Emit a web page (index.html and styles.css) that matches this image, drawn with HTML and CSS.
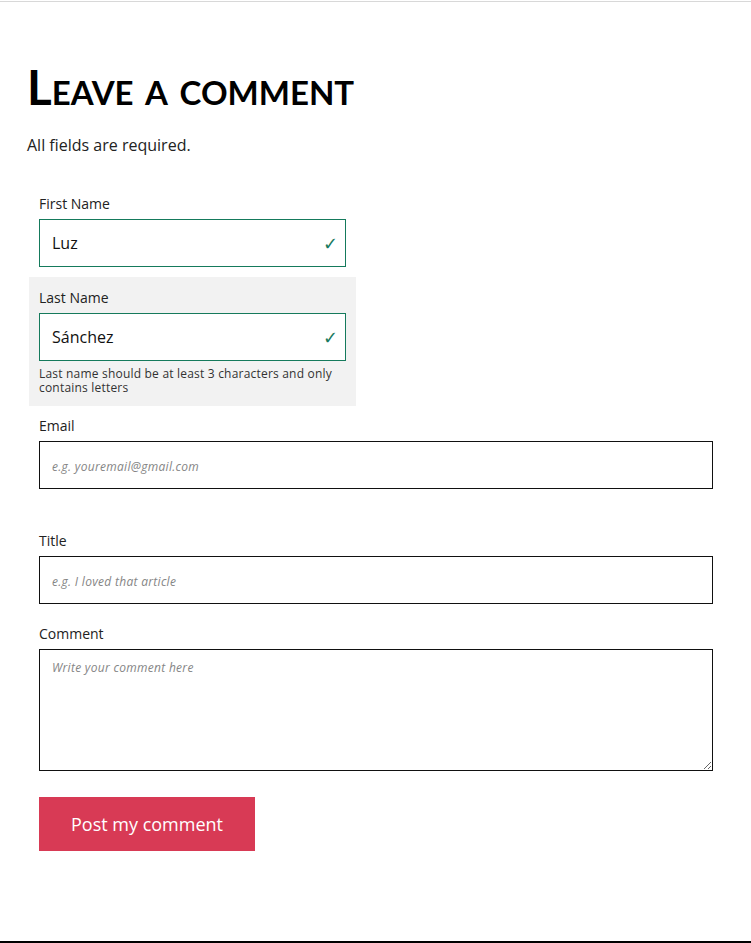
FILE: index.html
```html
<!DOCTYPE html>
<html lang="en">
<head>
<meta charset="utf-8">
<title>Leave a comment</title>
<link rel="stylesheet" href="styles.css">
</head>
<body>
<div class="page">
  <div class="topline"></div>
  <main class="content">
    <h1 class="title">Leave a comment</h1>
    <p class="note">All fields are required.</p>
    <form class="form">
      <div class="field narrow">
        <label class="label" for="first">First Name</label>
        <div class="input-wrap">
          <input class="input valid" id="first" type="text" value="Luz">
          <span class="check">✓</span>
        </div>
      </div>
      <div class="field narrow highlight">
        <label class="label" for="last">Last Name</label>
        <div class="input-wrap">
          <input class="input valid" id="last" type="text" value="Sánchez">
          <span class="check">✓</span>
        </div>
        <div class="hint">Last name should be at least 3 characters and only contains letters</div>
      </div>
      <div class="field spaced">
        <label class="label" for="email">Email</label>
        <input class="input" id="email" type="email" placeholder="e.g. youremail@gmail.com">
      </div>
      <div class="field">
        <label class="label" for="title">Title</label>
        <input class="input" id="title" type="text" placeholder="e.g. I loved that article">
      </div>
      <div class="field">
        <label class="label" for="comment">Comment</label>
        <textarea class="input area" id="comment" placeholder="Write your comment here"></textarea>
      </div>
      <div class="actions">
        <button class="submit" type="button">Post my comment</button>
      </div>
    </form>
  </main>
  <footer class="footer"></footer>
</div>
</body>
</html>
```
FILE: styles.css
```css
* { box-sizing: border-box; }
html, body { margin: 0; padding: 0; }
body {
  font-family: "Open Sans", "Noto Sans", sans-serif;
  color: #111;
  background: #fff;
}
.page {
  display: flex;
  flex-direction: column;
  min-height: 100vh;
}
.topline {
  height: 2px;
  border-bottom: 1px solid #d8d8d8;
}
.content {
  flex: 1;
  padding: 0 28px 0 27px;
}
.title {
  font-family: "Lato", "Open Sans", sans-serif;
  font-weight: 700;
  font-variant: small-caps;
  font-size: 47.5px;
  line-height: 48px;
  margin: 61px 0 0 0;
  color: #000;
  letter-spacing: 0;
}
.note {
  font-size: 16px;
  line-height: 22px;
  margin: 23px 0 28px 0;
  color: #222;
}
.form {
  display: flex;
  flex-direction: column;
  margin-left: 2px;
}
.field {
  padding: 10px;
}
.field.narrow { width: 327px; }
.field.highlight { background: #f2f2f2; padding-top: 11px; padding-bottom: 11px; }
.field.spaced { padding-bottom: 32px; }
.label {
  display: block;
  font-size: 14px;
  line-height: 20px;
  margin-bottom: 5px;
  color: #222;
}
.input-wrap { position: relative; }
.input {
  display: block;
  width: 100%;
  height: 48px;
  border: 1px solid #111;
  border-radius: 0;
  padding: 0 12px;
  font-family: "Open Sans", "Noto Sans", sans-serif;
  font-size: 16px;
  color: #111;
  background: #fff;
  outline: none;
}
.input.valid { border-color: #157a5c; }
.input::placeholder {
  font-style: italic;
  font-size: 12px;
  letter-spacing: 0.3px;
  color: #858585;
}
.area {
  height: 122px;
  padding: 9px 12px;
  resize: vertical;
}
.check {
  position: absolute;
  right: 8px;
  top: 50%;
  transform: translateY(-50%);
  color: #1a7a5e;
  font-size: 18px;
  font-weight: 400;
  line-height: 1;
}
.hint {
  margin-top: 6px;
  font-size: 12px;
  line-height: 14px;
  letter-spacing: 0.2px;
  color: #333;
}
.actions {
  padding: 16px 10px;
}
.submit {
  width: 216px;
  height: 54px;
  border: none;
  border-radius: 0;
  background: #d83a55;
  color: #fff;
  font-family: "Open Sans", "Noto Sans", sans-serif;
  font-size: 18px;
  cursor: pointer;
}
.footer {
  height: 2px;
  background: #000;
  margin-top: 1px;
}
```
